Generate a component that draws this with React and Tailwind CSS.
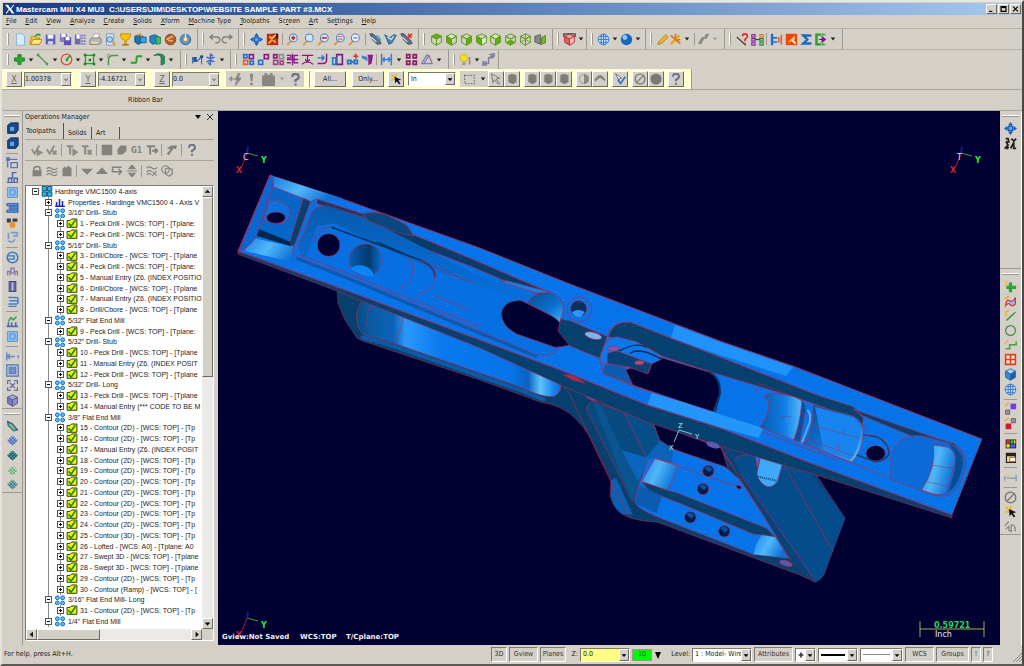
import React from 'react';
import { useState } from 'react';

const RED = '#b3264f';
const BG = '#000033';
const BLUE = '#0674e8';
const DARK = '#05406e';

// Small drawings, all on a 16x16 grid
const Cube = ({ top = 'none', left = 'none', right = 'none', stroke = '#5a9a10' }) => (
  <g stroke={stroke} strokeWidth="1.2" strokeLinejoin="round">
    <path d="M8 1L14 4L8 7.5L2 4Z" fill={top} />
    <path d="M2 4L8 7.5V15L2 11.5Z" fill={left} />
    <path d="M14 4L8 7.5V15L14 11.5Z" fill={right} />
  </g>
);

const Lens = ({ fill = '#cfe6ff', x = 9, y = 6, inner }) => (
  <g>
    <path d={`M${x - 3} ${y + 4}L1.5 15`} stroke="#d89a3c" strokeWidth="2.4" />
    <circle cx={x} cy={y} r="4.8" fill={fill} stroke="#5580b8" strokeWidth="1.3" />
    {inner}
  </g>
);

const Squares = ({ a, b, c, d }) => (
  <g fill="none" strokeWidth="2">
    <rect x="2" y="9" width="5" height="5" stroke={a} />
    <rect x="9" y="2" width="5" height="5" stroke={b} />
    {c && <rect x="2" y="2" width="4" height="4" stroke={c} />}
    {d && <rect x="10" y="10" width="4" height="4" stroke={d} />}
  </g>
);

const Hatch = ({ color = '#3f62b0', fill = '#9db4dc' }) => (
  <g>
    <path d="M8 1.5L15 8L8 14.5L1 8Z" fill={fill} />
    <path d="M4 5l7 7M6 3l7 7M2.500 7l6 6M12 5l-7 7M10 3L3 10M13.500 7l-6 6" stroke={color} strokeWidth="1.2" />
  </g>
);

const icons = {
  newFile: <path d="M3 1h7l3 3v11H3Z" fill="#d9ecff" stroke="#7fa8d8" />,
  open: <g><path d="M1 14L3 4h4l1 2h5v8Z" fill="#f5c430" stroke="#a8860a" /><path d="M2 14L5 8h11l-3 6Z" fill="#ffe680" stroke="#a8860a" /><path d="M8 4q3-4 6-1" stroke="#2c9a2c" strokeWidth="2" fill="none" /></g>,
  save: <g><path d="M2 2h12v12H2Z" fill="#5d62b8" /><path d="M4.500 2h7v5h-7Z" fill="#f0f0ff" /><path d="M5 10h6v4H5Z" fill="#d0d0e8" /></g>,
  saveAs: <g><path d="M1 1h9v10H1Z" fill="#8b80c8" /><path d="M3 1h5v4H3Z" fill="#fff" /><path d="M6 5h9v10H6Z" fill="#5d52b0" /><path d="M8 5h5v4H8Z" fill="#fff" /></g>,
  saveSome: <g><path d="M1 2h7v12H1Z" fill="#6a6ab0" /><path d="M3 2h4v5H3Z" fill="#fff" /><path d="M10 2v13M13 2v13" stroke="#6a6ab0" strokeWidth="2" strokeDasharray="2 1.500" /></g>,
  print: <g><path d="M4 7l2-6h7l-2 6" fill="#fff" stroke="#999" /><path d="M1 8l3-2h10l1 2v4l-3 2H1Z" fill="#b8b8b0" stroke="#777" /><path d="M3 11h8v2H3Z" fill="#f0e8a0" /></g>,
  preview: <g><path d="M3 1h9v14H3Z" fill="#d4e8fa" stroke="#6c90b8" /><circle cx="7" cy="8" r="3.500" fill="#a9d4ff" stroke="#466a98" /><path d="M10 11l4 4" stroke="#d8963c" strokeWidth="2" /></g>,
  funnel: <g><path d="M2 1h12v3q-1 4-5 5v4H7V9Q3 8 2 4Z" fill="#f8c40c" stroke="#bb8600" /><path d="M4 14.500h8" stroke="#b07a00" strokeWidth="2" /></g>,
  cube2: <g><path d="M1 4l6-2 4 2v7l-6 3-4-3Z" fill="#2072b8" stroke="#114878" /><path d="M8 5h7v7H8Z" fill="#36a3e6" stroke="#185890" /><path d="M4 3l3-2 3 3" stroke="#e6a020" strokeWidth="2" fill="none" /></g>,
  cube3: <g><path d="M1 4l6-2 4 2v7l-6 3-4-3Z" fill="#2387c8" stroke="#115878" /><path d="M8 5h6v8l-5 1Z" fill="#3cc070" stroke="#1a7038" /></g>,
  wood: <g><circle cx="8" cy="8" r="6.500" fill="#b4622a" stroke="#7a3a10" /><path d="M3 8l8-4M5 9l6 1" stroke="#f0b080" strokeWidth="1.800" /></g>,
  dial: <g><circle cx="8" cy="8" r="6.500" fill="#3a9ce0" stroke="#2060a0" /><circle cx="8" cy="8" r="3" fill="#ffe8b8" stroke="#e08020" strokeWidth="1.500" /><path d="M8 1v5" stroke="#fff" strokeWidth="1.500" /></g>,
  undo: <path d="M3 5h8a3.500 3.500 0 0 1 0 7H9M6 2L2.500 5L6 8" fill="none" stroke="#85827c" strokeWidth="1.700" />,
  redo: <path d="M13 5H5a3.500 3.500 0 0 0 0 7h2M10 2l3.500 3L10 8" fill="none" stroke="#85827c" strokeWidth="1.700" />,
  pan: <g><path d="M8 0l3 4H5ZM8 16l3-4H5ZM0 8l4-3v6ZM16 8l-4-3v6Z" fill="#1b5fc0" /><circle cx="8" cy="8" r="3.200" fill="#5aa2ea" stroke="#1b4fa0" strokeWidth="1.500" /></g>,
  redFit: <g><path d="M1 1h14v14H1Z" fill="#b82c14" /><path d="M3 13l5-5M4 4l3 3M12 12L9 9" stroke="#ffa030" strokeWidth="2.400" /><path d="M8 1h7v7Z" fill="#481408" /><path d="M7 7l5-5" stroke="#ffd060" strokeWidth="2" /></g>,
  zoomPlus: <Lens inner={<path d="M9 3.500v5M6.500 6h5" stroke="#e02020" strokeWidth="2" />} />,
  zoomBox: <Lens />,
  zoomMinus: <Lens inner={<path d="M6 6h6" stroke="#e02020" strokeWidth="2" />} />,
  zoomHalf: <Lens inner={<path d="M6 4.500h6M6 7.500h6" stroke="#c86060" strokeWidth="1.200" />} />,
  zoomOut: <Lens fill="#f4f4ff" inner={<path d="M6.500 6h5" stroke="#4878c8" strokeWidth="1.500" />} />,
  rotA: <g><path d="M1 1l4 8 5 5 5-1-2-4-8-8Z" fill="#5c7088" stroke="#384c64" /><path d="M3 5l6 6" stroke="#d8e4f0" strokeWidth="1.500" /><path d="M8 3q5 1 6 6" fill="none" stroke="#48a8d0" strokeWidth="2" /></g>,
  rotB: <g><path d="M1 2l6 4 5-4 3 1-5 9-4 2Z" fill="#4a88b8" stroke="#28507c" /><path d="M4 5l5 3 3-4" stroke="#d8ecfc" strokeWidth="1.500" fill="none" /></g>,
  rotC: <g><path d="M1 1l4 8 5 5 5-1-2-4-8-8Z" fill="#667088" stroke="#384058" /><path d="M3 5l6 6" stroke="#d8e4f0" strokeWidth="1.500" /><path d="M9 6l6-5M10 1l4 5" stroke="#d83030" strokeWidth="2" /></g>,
  gTop: <Cube top="#5fae12" />,
  gFrontL: <Cube left="#5fae12" top="#d8ecc0" />,
  gBack: <Cube right="#5fae12" />,
  gFront: <Cube left="#5fae12" right="#e8f4d8" />,
  gRight: <Cube right="#5fae12" top="#d8ecc0" />,
  gBottom: <g><Cube /><path d="M2 11.500L8 8l6 3.500L8 15Z" fill="#5fae12" /></g>,
  gIso: <g><Cube /><path d="M2 11.500L8 8l6 3.500M8 1v7" fill="none" stroke="#5a9a10" /></g>,
  gMix: <g><path d="M1 4l7-2v12l-7-3Z" fill="#888880" stroke="#555" /><path d="M9 6l5-3v9l-5 2Z" fill="#78b828" stroke="#487808" /></g>,
  redCube: <g><Cube top="#f0a0a0" left="#e06060" right="#f4c0c0" stroke="#c03030" /><path d="M1 5V1h14v4" stroke="#444" strokeWidth="1.500" fill="none" /></g>,
  wireGlobe: <g fill="none" stroke="#3a7ac8" strokeWidth="1.200"><circle cx="8" cy="8" r="6.500" fill="#d4e8fc" /><ellipse cx="8" cy="8" rx="3" ry="6.500" /><path d="M1.500 8h13M2.500 4.500h11M2.500 11.500h11M8 1.500v13" /></g>,
  ball: <g><circle cx="8" cy="8" r="7" fill="#1867c4" /><circle cx="6" cy="5.500" r="3" fill="#8cc8ff" /></g>,
  pencil: <path d="M2 14l2-4L12 2l3 3-8 8Z" fill="#f0b428" stroke="#a87810" />,
  spark: <g><path d="M2 14L13 3" stroke="#e8a818" strokeWidth="3" /><path d="M2 3l12 10M8 1v5M14 8l-5 1" stroke="#d07818" strokeWidth="2" /></g>,
  eraser: <path d="M1 13L6 5l3 0 2-4h4l-3 6H9l-4 7Z" fill="#8d8b86" />,
  query: <g><path d="M1 5l11 10" stroke="#444" strokeWidth="1.500" /><path d="M8 4q0-3 3-3t3 3q0 2-3 4v2M11 12v2" fill="none" stroke="#e02c20" strokeWidth="2" /></g>,
  lists: <g fill="none" strokeWidth="1.500"><path d="M1 2h4v3H1ZM1 7h4v3H1ZM1 12h4v3H1Z" stroke="#8a2a9a" /><path d="M11 2h4v3h-4Z" stroke="#e08020" /><path d="M11 7h4v3h-4ZM11 12h4v3h-4Z" stroke="#2a8a4a" /><path d="M5 8h6" stroke="#444" /></g>,
  blueRed: <g><path d="M1 1h3v14H1ZM4 5h5v2H4ZM4 10h5v2H4Z" fill="#2070d0" /><path d="M10 5h2v7h-2ZM13 2h2v12h-2Z" fill="#e86030" /></g>,
  orange: <g><path d="M1 1h14v14H1Z" fill="#e8480c" /><path d="M3 12l9-9v6Z" fill="#ffc060" /><path d="M9 9l4 4" stroke="#fff" strokeWidth="2" /></g>,
  sigma: <path d="M14 3H4l5 5-5 5h10" fill="none" stroke="#2068c0" strokeWidth="3" />,
  bracket: <g><path d="M9 2H3v12h6" fill="none" stroke="#28a028" strokeWidth="3" /><path d="M10 2h4M10 14h4" stroke="#28a028" strokeWidth="3" strokeDasharray="2 1" /><path d="M6 8h7M10 5l4 3-4 3Z" stroke="#7a1a8a" fill="#7a1a8a" strokeWidth="1.500" /></g>,
  plus: <path d="M6 2h4v4h4v4h-4v4H6v-4H2V6h4Z" fill="#28a832" stroke="#187820" />,
  line: <g><path d="M2 2l12 12" stroke="#4a8a4a" strokeWidth="1.500" /><path d="M1 1h3v3H1ZM12 12h3v3h-3Z" fill="#4a9a4a" /></g>,
  circle: <g><circle cx="8" cy="8" r="6.500" fill="none" stroke="#e05030" strokeWidth="1.600" /><path d="M8 8l5-5" stroke="#28a028" strokeWidth="2" /><path d="M7 7h3v3H7Z" fill="#28a028" /></g>,
  rect: <g><path d="M3 3h10v10H3Z" fill="none" stroke="#309a30" strokeWidth="1.600" /><path d="M1 1h3v3H1ZM12 12h3v3h-3ZM7 7h3v3H7ZM1 12h3v3H1ZM12 1h3v3h-3Z" fill="#208020" /></g>,
  fillet: <g fill="none" strokeWidth="1.800"><path d="M3 15V9q0-6 6-6h6" stroke="#4a9a4a" /><path d="M2 6V2h4" stroke="#a0a0a0" /></g>,
  spline: <path d="M1 12h6q1 0 1-4t1-4h6" fill="none" stroke="#28a028" strokeWidth="2.400" />,
  surface: <path d="M1 3q8-2 9 3v9l4-2V4q-2-3-8-3Z" fill="#2f9060" stroke="#1a6840" />,
  rc1: <g><path d="M2 5v8M2 6l6 4 5-6v10" stroke="#4c6a98" strokeWidth="1.500" fill="none" /><path d="M3 5h4v6H3ZM11 3h4v3h-4Z" fill="#2450a0" /></g>,
  rc2: <path d="M8 1v14M3 5l5 2 5-2M3 11l5-2 5 2M8 1l3 3M8 15l-3-3" stroke="#3a68c0" strokeWidth="1.800" fill="none" />,
  x1: <Squares a="#e06020" b="#7a1a9a" c="#2070d0" d="#2070d0" />,
  x2: <Squares a="#2070d0" b="#8a1a7a" />,
  x3: <Squares a="#a04080" b="#8a8a8a" c="#8a1a7a" d="#a04080" />,
  mirror: <path d="M8 1v14M1 3h5v3H1M1 12h5M15 3h-5v9h5M1 8h14" fill="none" stroke="#8a1a8a" strokeWidth="1.600" />,
  project: <path d="M1 3h14M1 14q7-6 14 0M8 3v8M5 8l3 3 3-3" fill="none" stroke="#8a1a7a" strokeWidth="1.600" />,
  offset: <g fill="none" strokeWidth="1.800"><path d="M13 1v8q0 4-5 4H2" stroke="#8a1a7a" /><path d="M2 6h7M7 3l3 3-3 3" stroke="#2070d0" /></g>,
  rectPurple: <g fill="none" strokeWidth="2"><path d="M7 2h7v12H7Z" stroke="#7a1a8a" /><path d="M2 6h4v8H2Z" stroke="#2080d0" /></g>,
  drag: <g><path d="M2 9h4v4H2ZM10 9h4v4h-4Z" fill="none" stroke="#2070d0" strokeWidth="2" /><path d="M9 4h6M12 1v6" stroke="#e03030" strokeWidth="2" /><path d="M6 11h4" stroke="#2070d0" strokeWidth="2" /></g>,
  roll: <g><path d="M1 3l7 2v5L1 6Z" fill="#3888d8" /><path d="M8 2h7l-2 11-4 2V6Z" fill="#8a1a8a" /></g>,
  dim: <path d="M2 1v14M14 1v14M2 8h12M5 5v6M11 5v6" fill="none" stroke="#3878d0" strokeWidth="1.800" />,
  grid4: <g fill="none" stroke="#8a1a6a" strokeWidth="2"><path d="M2 2h4v4H2ZM10 2h4v4h-4ZM2 10h4v4H2ZM10 10h4v4h-4Z" /></g>,
  tri: <path d="M2 13L8 3l3 0 4 10ZM5 13L11 3" fill="none" stroke="#8878a8" strokeWidth="1.500" />,
  bulb: <g><circle cx="6" cy="6" r="4.500" fill="#f8e020" stroke="#c8a810" /><path d="M4 11h4v4H4Z" fill="#a0a0a0" /><path d="M13 5v9" stroke="#888" strokeWidth="2" /></g>,
  chain: <path d="M2 13h6V6h6M9 2h3v3H9M12 1h3v3h-3M1 11h4v4H1Z" fill="none" stroke="#7878a0" strokeWidth="1.600" />,
  bolt: <path d="M1 7h6M4 4v6M13 1L9 8h3l-3 7 7-9h-4l2-5Z" stroke="#8b8984" strokeWidth="1.800" fill="#8b8984" />,
  bang: <path d="M6 1h4L9 10H7ZM6.500 12h3v3h-3Z" fill="#86847f" />,
  block: <path d="M0 3h3V0h3v2h4V0h3v3h3v13H0Z" fill="#898781" />,
  help: <path d="M4 5q0-4 4-4t4 4q0 2-4 4v2M8 13v2.500" fill="none" stroke="#6e7488" strokeWidth="2.800" />,
  cursorSpark: <g><path d="M2 2l5 5M2 9l4-1M8 1v5" stroke="#e8b820" strokeWidth="2" /><path d="M6 5l9 4-4 1 3 4-2 1-3-4-2 3Z" fill="#111" /></g>,
  dots: <path d="M2 3h12v10H2Z" fill="none" stroke="#777" strokeWidth="1.500" strokeDasharray="2 1.500" />,
  arrow: <path d="M2 1l11 6-5 1 5 6-2 1-5-6-2 4Z" fill="#d4d0c8" stroke="#777" strokeWidth="1.300" />,
  hexGray: <path d="M3 3l5-2 6 2v9l-5 3-6-3Z" fill="#7f7d79" />,
  faceGray: <g fill="#8a8883"><path d="M8 1l6 3v8l-6 3Z" /><circle cx="8" cy="8" r="6" fill="none" stroke="#8a8883" /></g>,
  chevron: <path d="M1 12V8l5-5h4l5 5v3L9 7H7Z" fill="#85837e" />,
  cursorBlue: <g><path d="M2 1l8 6-4 1 2 5Z" fill="#fff" stroke="#555" /><path d="M5 9l4 5 6-9" fill="none" stroke="#2f68c8" strokeWidth="2" /></g>,
  no: <g fill="none" stroke="#7d7b77" strokeWidth="1.800"><circle cx="8" cy="8" r="6.500" /><path d="M3.500 12.500l9-9" /></g>,
  disc: <circle cx="8" cy="8" r="7.500" fill="#7b7975" />,
  // operations manager
  tickA: <path d="M1 7l4 6 6-11M9 9l5 2.500-5 3Z" fill="none" stroke="#8d8b86" strokeWidth="2.400" />,
  tickB: <path d="M1 7l4 6 6-11M9 9l5 5M14 9l-5 5" fill="none" stroke="#8d8b86" strokeWidth="2.400" />,
  tA: <path d="M1 3h9M5.500 3v11M10 8l4 3-4 3Z" fill="#8d8b86" stroke="#8d8b86" strokeWidth="2.800" />,
  tB: <path d="M1 3h9M5.500 3v11M9 8l5 6M14 8l-5 6" fill="none" stroke="#8d8b86" strokeWidth="2.800" />,
  sq: <path d="M1 1h14v14H1Z" fill="#84827d" />,
  blob: <path d="M2 7l4-5h8v7l-5 5H2Z" fill="#84827d" />,
  tArrow: <path d="M1 3h11M5.500 3v11M8 9h6M12 6l3 3-3 3" fill="none" stroke="#84827d" strokeWidth="2.600" />,
  hammer: <path d="M1 6l6-4 8 0-2 5-3-1-6 9-3-2 5-6Z" fill="#84827d" />,
  lock: <g><path d="M2 7h12v8H2Z" fill="#84827d" /><path d="M4 8V5q0-3 4-3t4 3v3" fill="none" stroke="#84827d" strokeWidth="2" /></g>,
  waves: <path d="M1 5q3-3 7 0t7-1M1 9q3-3 7 0t7-1M1 13q3-3 7 0t7-1" fill="none" stroke="#84827d" strokeWidth="1.600" />,
  ghost: <path d="M2 5l3-3 2 2 2-3 5 3v11H2Z" fill="#84827d" />,
  down: <path d="M0 5h16l-8 8Z" fill="#84827d" />,
  up: <path d="M0 12h16L8 3Z" fill="#84827d" />,
  insert: <path d="M14 3H2v6h11M10 5l4 4-4 4" fill="none" stroke="#84827d" strokeWidth="2" />,
  updown: <path d="M8 0l4 5H4ZM8 16l4-5H4ZM1 8h14" fill="#84827d" stroke="#84827d" strokeWidth="1.500" />,
  waveX: <path d="M1 4q3-3 7 0t7-1M1 9q3-3 7 0M1 13q3-3 6 0M9 9l5 5M14 8l-6 7" fill="none" stroke="#84827d" strokeWidth="1.500" />,
  gear: <g fill="none" stroke="#84827d" strokeWidth="1.600"><circle cx="6" cy="6" r="5" /><path d="M6 5l4-1 5 2v6l-4 3-5-3Z" /></g>,
  // side bars
  solid: <g><path d="M2 4l4-3h9v9l-3 4H2Z" fill="#17488c" stroke="#0c2850" /><path d="M5 6h5v5H5Z" fill="#6aa4e4" /></g>,
  sA: <g fill="none" stroke="#5878b8" strokeWidth="1.600"><path d="M2 2v11M2 3h12M6 7h8v6H6Z" /><path d="M1 1h3v3H1Z" fill="#5878b8" /></g>,
  sB: <g fill="none" stroke="#4868b0" strokeWidth="1.800"><path d="M1 14h14M3 13V9h4v4M8 9V2h5M10 13V9h4v4" /></g>,
  sC: <g><path d="M2 2h12v12H2Z" fill="#8cc0f0" stroke="#4888d0" /><path d="M5 5h6v6H5Z" fill="none" stroke="#4888d0" /></g>,
  sD: <path d="M1 3h14v3H1ZM4 7h11v3H4ZM1 11h14v3H1Z" fill="#5c94dc" stroke="#3058a0" />,
  sE: <g><path d="M1 3h5v5H1ZM8 3h6v4H8Z" fill="#404040" /><circle cx="8" cy="11" r="3.500" fill="#f09028" /></g>,
  sF: <path d="M3 2v8M6 2h8v4H9M3 12q5 4 8-2" fill="none" stroke="#7898d0" strokeWidth="2" />,
  sG: <g fill="none" stroke="#3878c8" strokeWidth="1.800"><circle cx="8" cy="8" r="6.500" /><path d="M2 6h8v4H2" /></g>,
  sH: <path d="M2 13V8h3v5M11 13V8h3v5M6 4h4v6H6Z" fill="none" stroke="#8080a8" strokeWidth="1.600" />,
  sI: <g fill="#b8c0f0" stroke="#484880" strokeWidth="1.500"><path d="M4 2h8v12H4Z" /><path d="M6 2v12M10 2v12" /></g>,
  sJ: <path d="M3 3h10q2 0 2 2t-2 2H4M4 7h9q2 0 2 2t-2 2H3M5 11h8M3 14h10" fill="none" stroke="#3f80d0" strokeWidth="1.800" />,
  sK: <g><path d="M1 14h14M3 14V9M7 14V9M12 14V9" stroke="#4870b0" strokeWidth="2" /><path d="M3 8l3-5 3 3 4-4" stroke="#38a858" strokeWidth="2" fill="none" /></g>,
  sL: <path d="M1 3v10M15 6v4M2 8h9M5 5L2 8l3 3" fill="none" stroke="#6888c8" strokeWidth="1.800" />,
  sM: <g fill="none" stroke="#4070c0" strokeWidth="1.400"><path d="M1 1h14v14H1ZM4 4h8v8H4Z" /><path d="M6 6h4v4H6Z" fill="#90b8f0" /></g>,
  sN: <path d="M2 6V2h4M10 2h4v4M14 10v4h-4M6 14H2v-4M5 5l6 6M11 5l-6 6" fill="none" stroke="#6070a8" strokeWidth="1.600" />,
  sO: <Cube top="#a8a8d8" left="#7878b8" right="#9090c8" stroke="#585890" />,
  hatchA: <g><path d="M2 2l6 3 6 7-5 1-6-6Z" fill="#8cb0a8" stroke="#2f5878" strokeWidth="1.500" /><path d="M2 6l9 8" stroke="#38a050" strokeWidth="1.500" /></g>,
  hatchB: <Hatch />,
  hatchC: <Hatch color="#1f5060" fill="#58a0a0" />,
  hatchD: <Hatch color="#5a9a70" fill="#c8e8c0" />,
  hatchE: <Hatch color="#406cb0" fill="#90c090" />,
  runner: <path d="M2 2h3l1 4H2M9 2l3 3 3-3M3 7l2 3-3 3h4M8 14l4-7v7h3M2 14h3" fill="none" stroke="#222" strokeWidth="2.200" />,
  rA: <g><path d="M6 3h4v4h5v4h-5v4H6v-4H3V7h3Z" fill="#28a832" /><path d="M1 4l4-3M1 8l3-4" stroke="#f0c040" strokeWidth="2" /></g>,
  rB: <g><path d="M2 13q1-9 5-6t7-4v8q-3 4-6 1t-6 1Z" fill="#8cc4f0" stroke="#e03030" strokeWidth="1.500" /><path d="M1 5l5-4" stroke="#f0a030" strokeWidth="2" /></g>,
  rC: <g><path d="M3 14L14 4" stroke="#4a8a4a" strokeWidth="1.800" /><path d="M1 5l5-4M1 9l3-3" stroke="#e8b040" strokeWidth="1.800" /></g>,
  rD: <circle cx="8" cy="8" r="6" fill="none" stroke="#4a8a4a" strokeWidth="1.500" />,
  rE: <g><path d="M2 12h5V7h8V3" fill="none" stroke="#4aa040" strokeWidth="2" /><path d="M1 6l4-4" stroke="#e8b040" strokeWidth="1.800" /></g>,
  rF: <path d="M2 2h12v12H2ZM8 2v12M2 8h12" fill="#ffe8d0" stroke="#e03c20" strokeWidth="2" />,
  rG: <Cube top="#a8d8ff" left="#3888d8" right="#1c5cac" stroke="#2868b0" />,
  rH: <g><path d="M2 10h5v5H2Z" fill="#999" stroke="#555" /><path d="M8 2h7v7H8Z" fill="#7a38f0" /><path d="M1 5l5-4" stroke="#e8b040" strokeWidth="2" /></g>,
  rI: <g><path d="M9 2h5v5H9Z" fill="#999" stroke="#555" /><path d="M2 8h7v7H2Z" fill="#d01c2c" /><path d="M1 5l5-4" stroke="#e8b040" strokeWidth="2" /></g>,
  rJ: <g><path d="M2 3h13v11H2Z" fill="#222" /><path d="M3 4h4v4H3Z" fill="#e83030" /><path d="M8 4h3v4H8Z" fill="#30c030" /><path d="M12 4h2v4h-2ZM3 9h4v4H3Z" fill="#f0e030" /><path d="M8 9h6v4H8Z" fill="#4060f0" /></g>,
  rK: <g><path d="M3 3h11v11H3Z" fill="#ffd890" stroke="#222" strokeWidth="1.500" /><path d="M3 5h11" stroke="#222" strokeWidth="3" /><path d="M7 8h7v5H7Z" fill="#fff" stroke="#b05020" /></g>,
  rL: <g><path d="M1 6v6M15 5v8M3 9h11" stroke="#88a0c8" strokeWidth="1.800" /><path d="M2 5l5 3" stroke="#f0c060" strokeWidth="2" /></g>,
  rM: <path d="M1 7l5-5M2 11l4-3v5l3 1V6q5-1 5 8" fill="none" stroke="#888" strokeWidth="1.600" />,
};

const Icon = ({ name, className = 'size-[13px]' }) => (
  <svg viewBox="0 0 16 16" className={className} aria-hidden="true">{icons[name]}</svg>
);

// Toolbar parts
const Tool = ({ name }) => (
  <button type="button" aria-label={name} className="flex flex-1 items-center justify-center">
    <Icon name={name} />
  </button>
);

const Caret = ({ gray }) => (
  <button type="button" aria-label="More" className="flex w-2.5 shrink-0 items-center justify-center">
    <svg viewBox="0 0 8 8" className="size-1.5"><path d="M1 2h6L4 6Z" fill={gray ? '#a09d96' : '#222'} /></svg>
  </button>
);

const Sep = () => <span className="mx-0.5 my-1 w-px shrink-0 bg-[#9c9992]" />;

const Bar = ({ className, items }) => (
  <div className={'flex border-r border-[#9c9992] pr-1 ' + className}>
    <span className="my-1 mr-1 ml-1 w-0.5 shrink-0 border-l border-white bg-[#9c9992]" />
    {items.map((item, i) => {
      if (item === '|') return <Sep key={i} />;
      if (item === 'v') return <Caret key={i} />;
      if (item === 'g') return <Caret key={i} gray />;
      return <Tool key={i} name={item} />;
    })}
  </div>
);

const SideBar = ({ className, items }) => (
  <div className={'flex flex-col border-b border-[#9c9992] ' + className}>
    <span className="mx-0.5 mt-1 mb-1 h-0.5 shrink-0 border-t border-white bg-[#9c9992]" />
    {items.map((item, i) =>
      item === '|' ? (
        <span key={i} className="mx-1 my-0.5 h-px shrink-0 bg-[#9c9992]" />
      ) : (
        <button key={i} type="button" aria-label={item} className="flex min-h-0 flex-1 items-center justify-center">
          <Icon name={item} />
        </button>
      )
    )}
  </div>
);

const raised = 'border border-t-white border-l-white border-r-[#6b6964] border-b-[#6b6964] bg-[#d4d0c8]';
const sunken = 'border border-t-[#7b7974] border-l-[#7b7974] border-r-white border-b-white';

const Drop = ({ gray }) => (
  <svg viewBox="0 0 10 10" className={'h-full w-2.5 shrink-0 ' + raised}>
    <path d="M2 4h6L5 7.500Z" fill={gray ? '#8b8984' : '#000'} />
  </svg>
);

const Coord = ({ letter, value, className }) => (
  <div className={'flex items-center gap-0.5 ' + className}>
    <label htmlFor={'coord-' + letter} className={'flex size-4 items-center justify-center text-[9px] text-[#6b6964] underline ' + raised}>{letter}</label>
    <div className={'flex h-[15px] min-w-0 flex-1 ' + sunken}>
      <input id={'coord-' + letter} defaultValue={value} className="w-0 min-w-0 flex-1 bg-[#d4d0c8] outline-none" />
      <Drop gray />
    </div>
  </div>
);

const GrayButton = ({ name }) => (
  <button type="button" aria-label={name} className={'flex size-4 items-center justify-center ' + raised}>
    <Icon name={name} className="size-3" />
  </button>
);

const bars1 = [
  { w: 'w-[195px]', items: ['newFile', 'open', 'save', 'saveAs', 'saveSome', 'print', 'preview', 'funnel', 'cube2', 'cube3', 'wood', 'dial'] },
  { w: 'w-[41px]', items: ['undo', 'redo'] },
  { w: 'w-[180px]', items: ['pan', 'redFit', '|', 'zoomPlus', 'zoomBox', 'zoomMinus', 'zoomHalf', 'zoomOut', '|', 'rotA', 'rotB', 'rotC'] },
  { w: 'w-[134px]', items: ['gTop', 'gFrontL', 'gBack', 'gFront', 'gRight', 'gBottom', 'gIso', 'gMix'] },
  { w: 'w-[34px]', items: ['redCube', 'v'] },
  { w: 'w-[59px]', items: ['wireGlobe', 'v', 'ball', 'v'] },
  { w: 'w-[79px]', items: ['pencil', 'spark', 'v', '|', 'eraser', 'g'] },
  { w: 'w-[118px]', items: ['query', 'lists', '|', 'blueRed', 'orange', 'sigma', 'bracket', 'v'] },
];

const bars2 = [
  { w: 'w-[178px]', items: ['plus', 'v', 'line', 'v', 'circle', 'v', 'rect', 'v', 'fillet', 'v', 'spline', 'v', 'surface', 'v'] },
  { w: 'w-[50px]', items: ['rc1', 'rc2', 'v'] },
  { w: 'w-[218px]', items: ['x1', 'x2', 'x3', 'mirror', 'project', 'offset', 'rectPurple', 'drag', 'roll', '|', 'dim', 'v', 'grid4', 'tri', 'v'] },
  { w: 'w-[50px]', items: ['bulb', 'v', 'chain'] },
];

const menus = ['File', 'Edit', 'View', 'Analyze', 'Create', 'Solids', 'Xform', 'Machine Type', 'Toolpaths', 'Screen', 'Art', 'Settings', 'Help'];
const hotkey = { Screen: 2, Settings: 2 };

// Operations tree: [level, text]
const rows = [
  [0, 'Hardinge VMC1500 4-axis'],
  [1, 'Properties - Hardinge VMC1500 4 - Axis V', 'props'],
  [1, '3/16" Drill- Stub'],
  [2, '1 - Peck Drill - [WCS: TOP] - [Tplane:'],
  [2, '2 - Peck Drill - [WCS: TOP] - [Tplane:'],
  [1, '5/16" Drill- Stub'],
  [2, '3 - Drill/Cbore - [WCS: TOP] - [Tplane'],
  [2, '4 - Peck Drill - [WCS: TOP] - [Tplane:'],
  [2, '5 - Manual Entry (Z6. (INDEX POSITIO'],
  [2, '6 - Drill/Cbore - [WCS: TOP] - [Tplane'],
  [2, '7 - Manual Entry (Z6. (INDEX POSITIO'],
  [2, '8 - Drill/Cbore - [WCS: TOP] - [Tplane'],
  [1, '5/32" Flat End Mill'],
  [2, '9 - Peck Drill - [WCS: TOP] - [Tplane:'],
  [1, '5/32" Drill- Stub'],
  [2, '10 - Peck Drill - [WCS: TOP] - [Tplane'],
  [2, '11 - Manual Entry (Z6. (INDEX POSIT'],
  [2, '12 - Peck Drill - [WCS: TOP] - [Tplane'],
  [1, '5/32" Drill- Long'],
  [2, '13 - Peck Drill - [WCS: TOP] - [Tplane'],
  [2, '14 - Manual Entry (*** CODE TO BE M'],
  [1, '3/8" Flat End Mill'],
  [2, '15 - Contour (2D) - [WCS: TOP] - [Tp'],
  [2, '16 - Contour (2D) - [WCS: TOP] - [Tp'],
  [2, '17 - Manual Entry (Z6. (INDEX POSIT'],
  [2, '18 - Contour (2D) - [WCS: TOP] - [Tp'],
  [2, '19 - Contour (2D) - [WCS: TOP] - [Tp'],
  [2, '20 - Contour (2D) - [WCS: TOP] - [Tp'],
  [2, '21 - Contour (2D) - [WCS: TOP] - [Tp'],
  [2, '22 - Contour (2D) - [WCS: TOP] - [Tp'],
  [2, '23 - Contour (2D) - [WCS: TOP] - [Tp'],
  [2, '24 - Contour (2D) - [WCS: TOP] - [Tp'],
  [2, '25 - Contour (3D) - [WCS: TOP] - [Tp'],
  [2, '26 - Lofted - [WCS: A0] - [Tplane: A0'],
  [2, '27 - Swept 3D - [WCS: TOP] - [Tplane'],
  [2, '28 - Swept 3D - [WCS: TOP] - [Tplane'],
  [2, '29 - Contour (2D) - [WCS: TOP] - [Tp'],
  [2, '30 - Contour (Ramp) - [WCS: TOP] - ['],
  [1, '3/16" Flat End Mill- Long'],
  [2, '31 - Contour (2D) - [WCS: TOP] - [Tp'],
  [1, '1/4" Flat End Mill'],
];

const guide = 'bg-[linear-gradient(#8a8a8a,#8a8a8a)] bg-[length:1px_100%] bg-center bg-no-repeat';

const TreeIcon = ({ level, kind }) => (
  <svg viewBox="0 0 12 11" className="h-full w-3 shrink-0" aria-hidden="true">
    {kind === 'props' && <path d="M2.500 10V5M5.500 10V2M8.500 10V4M1 9.500h10" stroke="#2226b8" strokeWidth="1.600" />}
    {level === 0 && <path d="M1 .5h4.500v4.500H1ZM6.500 .5H11v4.500H6.500ZM1 6h4.500v4.500H1ZM6.500 6H11v4.500H6.500Z" fill="#28b4e8" stroke="#123c60" strokeWidth=".8" />}
    {level === 1 && !kind && (
      <g fill="#58c0f8" stroke="#0c64b0" strokeWidth=".9">
        <circle cx="3.300" cy="2.800" r="2" /><circle cx="8.700" cy="2.800" r="2" />
        <circle cx="3.300" cy="8.200" r="2" /><circle cx="8.700" cy="8.200" r="2" />
      </g>
    )}
    {level === 2 && (
      <g>
        <path d="M1 2.500h3L5.500 1H11v8.500H1Z" fill="#f4f010" stroke="#2a3a10" strokeWidth="1" />
        <path d="M2.500 5.500l2.500 3L9.500 2" fill="none" stroke="#158a1c" strokeWidth="1.600" />
      </g>
    )}
  </svg>
);

const TreeRow = ({ level, text, kind }) => {
  const isOpen = level < 2 && !kind;
  return (
    <li className="flex min-h-0 flex-1 items-center">
      {level > 0 && <span className="w-[13px] shrink-0" />}
      {level === 2 && <span className={'h-full w-3 shrink-0 ' + guide} />}
      <button type="button" aria-label={isOpen ? 'Collapse' : 'Expand'} className={'flex h-full w-3 shrink-0 items-center justify-center ' + (level ? guide : '')}>
        <svg viewBox="0 0 7 7" className="size-[7px] bg-white">
          <rect x=".5" y=".5" width="6" height="6" fill="#fff" stroke="#555" />
          <path d={isOpen ? 'M2 3.500h3' : 'M2 3.500h3M3.500 2v3'} stroke="#000" />
        </svg>
      </button>
      <TreeIcon level={level} kind={kind} />
      <span className="pl-0.5 whitespace-pre">{text}</span>
    </li>
  );
};

const Toggle = ({ icons: list }) => (
  <div className="flex h-[21px] border-t border-[#a8a59e] pl-1">
    {list.map((n, i) => (n === '|' ? <Sep key={i} /> : (
      <button key={i} type="button" aria-label={n} className="flex w-[15px] items-center justify-center">
        {n === 'G1' ? <span className="text-[8px] font-bold text-[#84827d]">G1</span> : <Icon name={n} className="size-3" />}
      </button>
    )))}
  </div>
);

const ScrollButton = ({ d, label }) => (
  <button type="button" aria-label={label} className={'size-[11px] shrink-0 ' + raised}>
    <svg viewBox="0 0 10 10" className="size-full"><path d={d} fill="#000" /></svg>
  </button>
);

const OperationsManager = () => {
  const [tab, setTab] = useState('Toolpaths');
  return (
    <section className="flex w-[196px] shrink-0 flex-col border-l border-[#9c9992] pr-1 pl-0.5">
      <div className="flex h-3 items-center justify-between">
        <h2>Operations Manager</h2>
        <span className="flex gap-1">
          <svg viewBox="0 0 8 8" className="size-2"><path d="M1 2h6L4 6Z" /></svg>
          <svg viewBox="0 0 8 8" className="size-2"><path d="M1 1l6 6M7 1L1 7" stroke="#333" /></svg>
        </span>
      </div>
      <div role="tablist" className="flex h-4 items-end pl-px">
        {['Toolpaths', 'Solids', 'Art'].map((t) => (
          <button
            key={t}
            type="button"
            role="tab"
            aria-selected={tab === t}
            onClick={() => setTab(t)}
            className={'border-r border-[#55534f] text-left ' + (t === 'Toolpaths' ? 'h-4 w-[38px]' : 'h-3 w-7 pl-1')}
          >
            {t}
          </button>
        ))}
      </div>
      <Toggle icons={['tickA', 'tickB', '|', 'tA', 'tB', '|', 'sq', 'blob', 'G1', 'tArrow', '|', 'hammer', '|', 'help']} />
      <Toggle icons={['lock', 'waves', 'ghost', '|', 'down', 'up', 'insert', 'updown', '|', 'waveX', 'gear']} />
      <div className={'mt-1 mb-1 flex min-h-0 flex-1 flex-col bg-white ' + sunken}>
        <div className="flex min-h-0 flex-1">
          <ul className="flex min-w-0 flex-1 flex-col overflow-hidden pb-0.5 pl-[3px] font-['Liberation_Sans',sans-serif]">
            {rows.map(([level, text, kind]) => (
              <TreeRow key={text} level={level} text={text} kind={kind} />
            ))}
          </ul>
          <div className="flex w-[11px] flex-col bg-[#eceae6]">
            <ScrollButton label="Scroll up" d="M2 6.500h6L5 3Z" />
            <span className={'h-[180px] ' + raised} />
            <span className="flex-1" />
            <ScrollButton label="Scroll down" d="M2 4h6L5 7.500Z" />
          </div>
        </div>
        <div className="flex h-[11px] bg-[#eceae6]">
          <ScrollButton label="Scroll left" d="M6.500 2v6L3 5Z" />
          <span className={'w-[63px] ' + raised} />
          <span className="flex-1" />
          <ScrollButton label="Scroll right" d="M4 2v6l3.500-3Z" />
          <span className="w-[11px] bg-[#d4d0c8]" />
        </div>
      </div>
    </section>
  );
};

const Gnomon = ({ x, y, name }) => (
  <g fontSize="8" fontWeight="700">
    <path d={`M${x} ${y}L${x + 11} ${y + 3}`} stroke="#22a83c" />
    <path d={`M${x} ${y}L${x - 5} ${y + 13}`} stroke="#a81c30" />
    <path d={`M${x} ${y}L${x + 1} ${y - 6}`} stroke="#1818a0" strokeWidth="2" />
    <text x={x + 14} y={y + 10} fill="#22e83c">Y</text>
    <text x={x - 11} y={y + 20} fill="#d0243c">X</text>
    {name && <text x={x - 4} y={y + 7} fill="#d8d8e8" fontWeight="400">{name}</text>}
  </g>
);

const Viewport = () => (
  <svg viewBox="218 111 782 534" preserveAspectRatio="xMidYMid slice" className="h-full min-w-0 flex-1 bg-[#000033]" role="img" aria-label="Part model" fontFamily="DejaVu Sans">
    <defs>
      <linearGradient id="pocket"><stop offset="0" stopColor="#064a86" /><stop offset=".08" stopColor="#0b5ca6" /><stop offset=".18" stopColor="#0a62b8" /><stop offset=".24" stopColor="#2a98fa" /><stop offset=".42" stopColor="#0a78ee" /><stop offset=".76" stopColor="#0674e8" /><stop offset=".84" stopColor="#0b62c0" /><stop offset=".9" stopColor="#5cc4f8" /><stop offset=".96" stopColor="#1a88f0" /><stop offset="1" stopColor="#0a6cd8" /></linearGradient>
      <linearGradient id="cyl"><stop offset="0" stopColor="#0a5aa8" /><stop offset=".55" stopColor="#0f7ce8" /><stop offset="1" stopColor="#58c0fc" /></linearGradient>
      <linearGradient id="shine" x2="1" y2=".4"><stop offset="0" stopColor="#1a80e8" /><stop offset=".5" stopColor="#50b8f8" /><stop offset="1" stopColor="#0a70d8" /></linearGradient>
      <linearGradient id="drop" x2=".7" y2="1"><stop offset="0" stopColor="#0a4c86" /><stop offset=".6" stopColor="#0a70d4" /><stop offset="1" stopColor="#48b0f8" /></linearGradient>
      <linearGradient id="bore"><stop offset="0" stopColor="#0a5eb4" /><stop offset=".6" stopColor="#03396c" /><stop offset="1" stopColor="#0872d8" /></linearGradient>
      <linearGradient id="wall" x1=".6" x2=".4" y1="0" y2="1"><stop offset="0" stopColor="#0858a8" /><stop offset="1" stopColor="#0674e8" /></linearGradient>
    </defs>

    {/* lower frame */}
    <path d="M337 286L338 303L345 320L357 338L363 341L480 380L527 397L540 402Q563 405 577 420Q584 427 590 437L611 480L610 495Q613 508 622 514Q633 521 657 522L800 575L815 582Q821 580 824 575L845 518L813 470L560 370Z" fill={DARK} stroke={RED} strokeWidth=".6" />
    <path d="M611 480L611 495Q613 508 622 514L633 515L616 478Z" fill="#0861b4" />
    <path d="M363 300Q355 310 357 320Q358 332 366 336L393 343L520 387Q545 399 555 396Q563 390 560 384L553 375L527 362L400 305Z" fill="url(#pocket)" stroke={RED} strokeWidth=".7" />
    <path d="M361 337L393 346L520 390L545 400" fill="none" stroke="#0a5aa4" strokeWidth="4" />
    <path d="M372 299q-6 14-5 28M403 318q-2 14-9 25" fill="none" stroke={RED} strokeWidth=".6" />

    <g transform="translate(540 370) scale(.3333)" stroke={RED} strokeWidth="2">
      <path d="M70 50L85 65L210 330L270 440" fill="none" />
      <path d="M140 120Q140 98 160 95L250 125L350 160L380 210L330 280L295 400L275 390Z" fill="#064a80" />
      <path d="M160 100L185 110L245 240L320 265L300 335L290 395L270 380Z" fill="#0a5490" stroke="none" />
      <path d="M245 240L325 265L295 335Z" fill="#0a66c0" stroke="none" />
      <path d="M250 125L320 265L362 215L340 160Z" fill="#064e88" />
      <path d="M340 158L545 235L565 300L400 238L360 212Z" fill={BG} />
      <path d="M360 212L400 238L555 290L600 330L700 480L745 565L640 553L350 440Q290 415 285 395L300 335L325 265Z" fill={BLUE} />
      <path d="M360 212L400 238L395 285L345 265L310 270Z" fill="#0b62b8" stroke="none" />
      <path d="M345 265L415 285L385 362L305 335Q325 300 345 265Z" fill="url(#shine)" />
      <path d="M345 265L600 352" fill="none" />
      <path d="M305 335L385 362L410 368L680 475L705 500L640 492L420 400L330 365Z" fill={DARK} />
      <path d="M300 345L365 378L350 430L285 400Z" fill="#0b5cb0" stroke="none" />
      <path d="M665 495L705 502L745 565L640 553L650 520Z" fill="url(#shine)" stroke="none" />
      {[[505, 303], [489, 357], [451, 442], [553, 484]].map(([cx, cy]) => (
        <g key={cx}>
          <circle cx={cx} cy={cy} r="17" fill="#041c48" />
          <path d={`M${cx - 12} ${cy - 8}q12 -14 24 2l-8 10Z`} fill="#0850a0" stroke="none" />
        </g>
      ))}
      <path d="M590 345l15 5-4 8-10-4Z" fill={BG} />
      <ellipse cx="158" cy="82" rx="22" ry="9" transform="rotate(18 158 82)" fill="#4c5aa0" />
      <ellipse cx="738" cy="580" rx="20" ry="8" transform="rotate(18 738 580)" fill="#5c5aa8" />
    </g>

    {/* right leg */}
    <g transform="translate(720 330) scale(.3333)" stroke={RED} strokeWidth="2">
      <path d="M0 340L40 380L60 420L212 690L285 757L0 350Z" fill={DARK} />
      <path d="M-20 300L0 340L212 690L285 757Q303 750 310 735L375 565L280 425L110 360Z" fill="#05437a" stroke="none" />
      <path d="M40 385Q60 370 110 375L270 425L375 565L310 735Q303 750 285 757L60 430Z" fill="#044c8c" stroke="none" />
      <path d="M40 395Q50 372 110 372M60 430L285 750M190 400L340 665M212 690L0 350" fill="none" />
      <path d="M105 372L120 378L112 412Z" fill="#0f80f0" />
      <path d="M122 378L190 392L172 455Q150 480 132 465Q108 445 112 425Z" fill="#3fa8f8" />
      <path d="M114 440l55 12" strokeDasharray="3 3" fill="none" stroke="#0a4a80" strokeWidth="6" />
    </g>

    {/* upper body */}
    <path d="M238 251L337 287L480 340L563 371L647 405L720 428L813 464L952 515L952 518L813 474L720 446L647 422L563 386L480 348L337 291L238 254Z" fill={DARK} stroke={RED} strokeWidth=".6" />
    <path d="M270 175L340 198L480 248L570 284L720 341L793 366L982 439L952 515L813 464L720 428L647 405L563 371L480 340L337 287L238 251Z" fill={BLUE} stroke={RED} strokeWidth=".8" />
    <path d="M675 325L720 342L793 367L786 376L720 355L671 338Z" fill="#1f93fb" />
    <ellipse cx="713" cy="445" rx="7" ry="3" transform="rotate(18 713 445)" fill="#5c5aa8" />

    <g transform="translate(220 140) scale(.3333)" stroke={RED} strokeWidth="2">
      <path d="M165 110L300 154L370 176L345 182L290 178L270 184L215 165L160 145Z" fill="url(#shine)" stroke="none" />
      <path d="M80 290L220 320L240 372L75 333Z" fill="url(#shine)" stroke="none" />
      <path d="M150 105Q160 120 160 150L110 290Q80 330 55 336L150 105Z" fill="#0a66d0" />
      <path d="M160 140L268 182L215 318L110 280Z" fill="#0866c8" />
      <path d="M250 175L272 185L225 318L207 315Z" fill={DARK} />
      <path d="M118 268L210 305L212 318L110 288Z" fill="#02264e" stroke="none" />
      <path d="M148 180Q200 180 212 215Q205 245 185 252L130 240Z" fill="#0a70de" />
      <ellipse cx="168" cy="233" rx="28" ry="17" fill={BG} />
      <path d="M230 350Q212 340 220 325L268 195Q275 178 292 178L430 222L750 355L990 458Q1035 485 1032 520L1020 615L1000 640Q975 652 950 645L750 560L370 405Z" fill="#0670e2" />
      <path d="M292 178L430 222L750 355L990 458Q1030 478 1032 500L980 475L750 378L560 305L430 245L290 190Z" fill="#053c6c" />
      <path d="M245 345Q230 330 240 305L275 220Q285 198 320 198L440 235L750 395L960 470L955 500L750 430L560 355L340 250L290 260L260 350Z" fill="url(#wall)" stroke="none" />
      <path d="M425 222Q465 212 500 225L560 255L582 288Q555 285 535 278L450 245Z" fill="#08487e" />
      <path d="M240 335Q230 320 245 295L272 225Q285 195 320 195L440 235M600 365L760 430M640 465L750 510M240 345L370 395L780 560" fill="none" />
      <path d="M280 310Q290 255 335 262L560 345Q585 370 578 400Q565 440 540 445" fill="none" />
      <path d="M335 262L600 360Q645 380 645 410M560 345L470 305" fill="none" stroke="#043464" strokeWidth="5" />
      <path d="M600 360Q645 380 645 410Q640 460 590 463" fill="none" />
      <circle cx="326" cy="315" r="34" fill={BG} />
      <ellipse cx="437" cy="360" rx="50" ry="48" fill="url(#bore)" />
      <path d="M390 385Q410 370 440 380Q460 390 462 410Q420 412 390 385Z" fill="#0a84f8" stroke="none" />
      <path d="M230 355L370 410L780 580L950 650" fill="none" stroke="#0a58b0" strokeWidth="9" />
    </g>

    <g transform="translate(470 230) scale(.3333)" stroke={RED} strokeWidth="2">
      <path d="M170 220Q185 190 240 186Q285 205 280 240L262 300L240 255Z" fill="url(#drop)" />
      <path d="M95 155L200 190L240 186L110 152Z" fill="#0a84f0" />
      <path d="M95 245Q105 210 155 212L240 255Q268 270 272 285L300 345L275 350L255 352L140 312Q90 285 95 245Z" fill={BG} />
      <path d="M272 268L300 272L412 320L390 385L300 348L264 303Z" fill={DARK} />
      <ellipse cx="370" cy="317" rx="26" ry="10" transform="rotate(15 370 317)" fill="#78b4f0" />
      <circle cx="328" cy="238" r="37" fill="none" />
      <circle cx="326" cy="236" r="24" fill="#053060" />
      <path d="M306 246q20-12 38 0l-12 16q-20 0-26-16Z" fill="#2b98f8" stroke="none" />
      <path d="M388 385L415 310Q430 272 480 277L810 405L1040 495L1150 540L1190 600L1100 690L750 560L480 465L400 430Z" fill={BLUE} />
      <path d="M415 320Q430 272 480 277L810 405L1040 495L1150 530L1180 565L1175 600Q1160 570 1140 560L1000 510L870 470L720 425L575 378L520 345Z" fill={DARK} />
      <path d="M465 420L575 383L720 427Q752 445 750 490L730 545L650 520L488 465Z" fill={BG} />
      <path d="M720 427Q752 445 750 490L735 545" fill="none" stroke="#053868" strokeWidth="6" />
      <path d="M400 430Q395 400 430 400Q465 400 468 420L488 465Z" fill="#0b5cb0" />
      <path d="M395 370Q405 325 440 320L500 335L570 375L575 388L545 402L535 430L480 412L412 400Q395 405 390 385Z" fill="#0a78ec" />
      <path d="M412 370L440 362L545 402L532 432L480 412L412 400Z" fill="#054278" />
      <path d="M415 360Q430 345 450 362Q500 335 530 352M480 370Q510 350 575 388" fill="none" stroke="#082c58" strokeWidth="4" />
      <ellipse cx="430" cy="356" rx="18" ry="7" fill="#7a5cae" />
      <ellipse cx="508" cy="398" rx="14" ry="6" fill="#a85078" />
      <path d="M280 435Q310 430 345 460L310 450Z" fill="#a03050" />
      <path d="M545 488L650 520L735 548L880 594L866 624L750 592L533 523Z" fill="#2395fb" stroke="none" />
    </g>

    <g transform="translate(720 330) scale(.3333)" stroke={RED} strokeWidth="2">
      <path d="M130 200L155 190Q240 195 250 220Q245 270 222 330L120 292Q155 240 145 210Z" fill="url(#cyl)" />
      <path d="M245 212Q262 225 255 250L240 335L222 330Q240 280 245 220Z" fill="#0a50a0" />
      <path d="M280 225L400 258Q432 275 430 310Q425 370 395 396L250 342Q265 330 278 270Z" fill="url(#drop)" />
      <path d="M285 230L400 262Q425 280 420 320Q410 370 390 390L310 360Z" fill="#1884f0" stroke="none" />
      <path d="M262 240Q275 250 268 280L245 340" fill="none" stroke="#4cb0fc" strokeWidth="6" />
      <path d="M275 285L420 325M255 325L400 378M115 160L250 210M115 160L108 190M355 340v25M370 295v20M180 262q15-4 35-2" fill="none" strokeWidth="1.500" />
      <path d="M400 238L640 322L700 340Q735 365 735 390L715 365L640 340L580 320L430 258Z" fill={DARK} />
      <path d="M430 315L470 320Q505 335 508 370Q495 395 465 395L410 375" fill="none" stroke="#06427c" strokeWidth="5" />
      <path d="M430 315L470 318Q508 335 508 370" fill="none" />
      <ellipse cx="467" cy="370" rx="29" ry="23" fill={BG} />
      <path d="M510 425Q505 370 540 332Q565 312 610 318L690 340Q735 360 738 400Q725 470 690 495Q670 502 640 495L510 448Z" fill="#0a6ad8" />
      <path d="M640 345L685 352Q712 370 705 400L680 485Q670 497 640 492L605 480Q650 410 640 345Z" fill="url(#shine)" />
      <path d="M685 340Q735 365 728 405Q715 470 685 485Q715 400 705 370Z" fill="#074c92" stroke="none" />
      <path d="M635 405L700 415M620 455L690 470" fill="none" strokeWidth="1.500" />
      <path d="M240 335L400 400L500 440" fill="none" />
    </g>

    {/* axes and captions */}
    <Gnomon x={247} y={153} name="C" />
    <Gnomon x={961} y={153} name="T" />
    <Gnomon x={247} y={618} />
    <g stroke="#9ff0f0" fill="none" strokeWidth=".8"><path d="M679 430L692 434M679 430L674 442" /></g>
    <g fill="#a8f4f4" fontSize="7">
      <text x="678" y="428">Z</text><text x="695" y="439">Y</text><text x="669" y="450">X</text>
    </g>
    <g fontSize="7" fontWeight="700" fill="#f0f0f0">
      <text x="222" y="639">Gview:Not Saved</text>
      <text x="300" y="639">WCS:TOP</text>
      <text x="346" y="639">T/Cplane:TOP</text>
    </g>
    <path d="M920 621v16M984 621v16M920 629h64" stroke="#a8b040" fill="none" />
    <text x="934" y="628" fontSize="8" fontWeight="700" fill="#22d85a">0.59721</text>
    <text x="935" y="637" fontSize="8" fill="#e8e8e8">Inch</text>
  </svg>
);

const Cell = ({ className, children }) => (
  <button type="button" className={'h-full shrink-0 text-[#333] ' + sunken + ' ' + className}>{children}</button>
);

const StatusBar = () => (
  <footer className="flex h-[19px] shrink-0 items-center gap-0.5 py-0.5 pl-0.5">
    <p className="flex-1">For help, press Alt+H.</p>
    <Cell className="w-4">3D</Cell>
    <Cell className="w-[29px]">Gview</Cell>
    <Cell className="w-[26px]">Planes</Cell>
    <label htmlFor="depth" className="w-2.5 text-right">Z:</label>
    <div className={'flex h-3.5 w-[50px] ' + sunken}>
      <input id="depth" defaultValue="0.0" className="w-0 flex-1 bg-[#ffff80] pl-0.5 outline-none" />
      <Drop />
    </div>
    <button type="button" className="h-3 w-5 border border-[#9c9992] bg-[#00f800] text-[#065a06]">10</button>
    <button type="button" aria-label="Colour" className="w-2.5"><svg viewBox="0 0 8 8" className="size-2"><path d="M1 1h6L4 8Z" /></svg></button>
    <label htmlFor="level" className="w-6 text-right">Level:</label>
    <div className={'flex h-3.5 w-[60px] ' + sunken}>
      <select id="level" className="w-0 flex-1 appearance-none bg-white pl-0.5 outline-none"><option>1 : Model- Wire</option></select>
      <Drop />
    </div>
    <Cell className="w-[39px]">Attributes</Cell>
    <button type="button" aria-label="Point style" className={'flex h-3.5 w-[21px] items-center justify-end bg-white ' + sunken}><svg viewBox="0 0 10 10" className="size-2"><path d="M5 2v6M2 5h6" stroke="#333" strokeWidth="2" /></svg><Drop /></button>
    <button type="button" aria-label="Line style" className={'flex h-3.5 w-10 items-center bg-white ' + sunken}><span className="mx-0.5 h-0.5 flex-1 bg-black" /><Drop /></button>
    <button type="button" aria-label="Line width" className={'flex h-3.5 w-[43px] items-center bg-white ' + sunken}><span className="mx-0.5 h-px flex-1 bg-[#888]" /><Drop /></button>
    <Cell className="w-[29px]">WCS</Cell>
    <Cell className="w-[33px]">Groups</Cell>
    <Cell className="w-2.5">!</Cell>
    <Cell className="mr-[17px] w-2.5">?</Cell>
    <svg viewBox="0 0 10 10" className="size-2.5 self-end"><path d="M1 10L10 1M4 10L10 4M7 10L10 7" stroke="#8b8984" /></svg>
  </footer>
);

const App = () => (
  <div className="flex h-screen flex-col overflow-hidden border-t-2 border-r-2 border-b-2 border-l-2 border-t-[#e8e6e0] border-r-[#4a4844] border-b-[#5c5a56] border-l-[#e4e2dc] bg-[#d4d0c8] font-['DejaVu_Sans_Condensed','Liberation_Sans',sans-serif] text-[7px] leading-[9px] text-[#1c1c1c]">
    <header className="shrink-0">
      <div className="mt-px ml-px flex h-3 items-center bg-linear-to-r from-[#183a84] to-[#a6caf0] pl-0.5 text-white">
        <svg viewBox="0 0 16 16" className="mr-px size-2.5"><path d="M0 1h5l4 6 4-6h2l-5 7 5 7h-4L7 9l-4 6H1l5-7Z" fill="#fff" /></svg>
        <h1 className="flex-1 font-['Liberation_Sans',sans-serif] text-[8px] font-bold whitespace-pre">Mastercam Mill X4 MU3  C:\USERS\JIM\DESKTOP\WEBSITE SAMPLE PART #3.MCX</h1>
        {['M2 8h4', 'M2 2h6v6H2ZM2 3h6', 'M2 2l6 6M8 2L2 8'].map((d) => (
          <button key={d} type="button" aria-label="Window" className={'mr-px h-2.5 w-[11px] ' + raised}>
            <svg viewBox="0 0 10 10" className="size-full"><path d={d} fill="none" stroke="#000" strokeWidth="1.500" /></svg>
          </button>
        ))}
      </div>
      <nav className="flex h-[13px] w-[374px] items-center justify-between pl-1">
        {menus.map((m) => {
          const k = hotkey[m] || 0;
          return (
            <a key={m} href="#menu">{m.slice(0, k)}<u>{m[k]}</u>{m.slice(k + 1)}</a>
          );
        })}
      </nav>
      <div className="flex h-[21px] border-t border-[#b4b1aa] pl-px">
        {bars1.map((b) => <Bar key={b.w} className={b.w} items={b.items} />)}
      </div>
      <div className="flex h-5 border-t border-[#b4b1aa] pl-px">
        {bars2.map((b, i) => <Bar key={i} className={b.w} items={b.items} />)}
      </div>
      <div className="flex h-[21px] border-b border-[#a8a59e]">
        <div className="flex w-[690px] items-center border-r border-[#9c9992] bg-[#ffffcf] pl-1">
          <Coord letter="X" value="1.00378" className="mr-2 w-[66px]" />
          <Coord letter="Y" value="-4.16721" className="mr-2 w-[66px]" />
          <Coord letter="Z" value="0.0" className="mr-1.5 w-[66px]" />
          <div className="flex h-4 w-[78px] bg-[#d4d0c8]">
            <Tool name="bolt" /><Tool name="bang" /><Tool name="block" /><Caret gray /><Tool name="help" />
          </div>
          <span className="mx-1 h-4 w-0.5 border-l border-white bg-[#9c9992]" />
          <button type="button" className={'mr-1.5 h-4 w-8 ' + raised}>All...</button>
          <button type="button" className={'mr-1 h-4 w-8 ' + raised}>Only...</button>
          <GrayButton name="cursorSpark" />
          <div className={'mx-1 flex h-3.5 w-12 ' + sunken}>
            <select aria-label="Selection" className="w-0 flex-1 appearance-none bg-white pl-0.5 outline-none"><option>In</option></select>
            <Drop />
          </div>
          <div className="flex h-4 w-7 bg-[#d4d0c8]"><Tool name="dots" /><Caret /></div>
          <GrayButton name="arrow" /><GrayButton name="hexGray" />
          <span className="w-1" />
          <GrayButton name="hexGray" /><GrayButton name="hexGray" /><GrayButton name="hexGray" />
          <span className="w-1" />
          <GrayButton name="faceGray" /><GrayButton name="chevron" />
          <span className="w-1" />
          <GrayButton name="cursorBlue" />
          <span className="w-1" />
          <GrayButton name="no" /><GrayButton name="disc" />
          <span className="w-1" />
          <GrayButton name="help" />
        </div>
      </div>
      <div className="flex h-[21px] items-center border-b border-[#a8a59e] pl-[126px]">Ribbon Bar</div>
    </header>

    <main className="flex min-h-0 flex-1">
      <div className="flex w-5 shrink-0 flex-col">
        <SideBar className="h-[298px]" items={['solid', 'solid', '|', 'sA', 'sB', 'sC', 'sD', 'sE', 'sF', '|', 'sG', 'sH', 'sI', 'sJ', '|', 'sK', 'sC', '|', 'sL', 'sM', 'sN', 'sO']} />
        <SideBar className="h-[84px]" items={['hatchA', 'hatchB', 'hatchC', 'hatchD', 'hatchE']} />
      </div>
      <OperationsManager />
      <Viewport />
      <div className="flex w-[22px] shrink-0 flex-col border-r border-white">
        <SideBar className="h-[158px] [&>button]:max-h-[15px]" items={['pan', 'runner']} />
        <SideBar className="h-[266px]" items={['rA', 'rB', 'rC', 'rD', 'rE', 'rF', 'rG', 'wireGlobe', '|', 'rH', 'rI', '|', 'rJ', 'rK', '|', 'rL', '|', 'no', 'cursorSpark', 'rM']} />
      </div>
    </main>
    <StatusBar />
  </div>
);

export default App;
